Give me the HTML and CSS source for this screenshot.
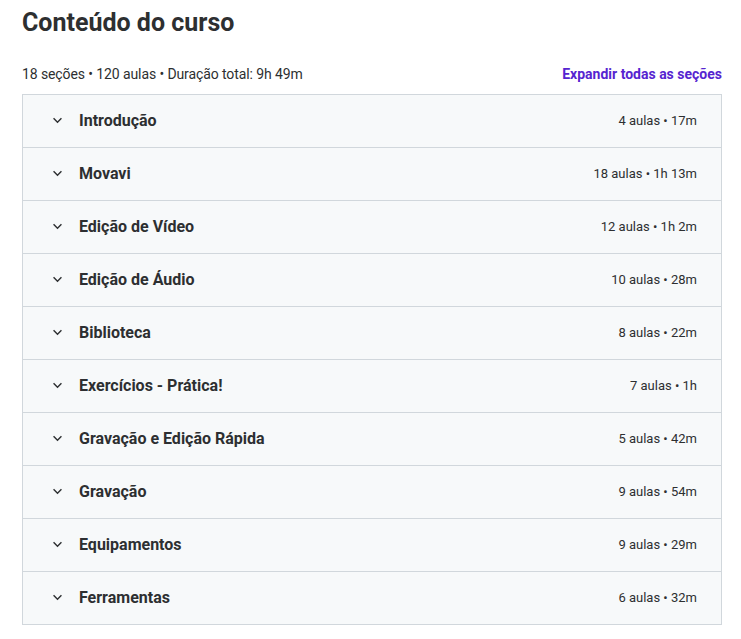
FILE: index.html
```html
<!DOCTYPE html>
<html lang="pt-BR">
<head>
    <meta charset="UTF-8"/>
    <meta name="viewport" content="width=device-width, initial-scale=1"/>
    <title>Conteúdo do curso</title>
    <link rel="stylesheet" href="styles.css">
</head>
<body>

<div class="curso">
    <h2 class="curso-titulo">Conteúdo do curso</h2>

    <div class="curso-resumo">
        <span>18 seções • 120 aulas • Duração total: 9h 49m</span>
        <button class="expandir">Expandir todas as seções</button>
    </div>

    <div class="secoes">
        <div class="secao">
            <svg class="seta" viewBox="0 0 12 8"><path d="M1.5 1.5 6 6l4.5-4.5"/></svg>
            <span class="secao-nome">Introdução</span>
            <span class="secao-info">4 aulas • 17m</span>
        </div>
        <div class="secao">
            <svg class="seta" viewBox="0 0 12 8"><path d="M1.5 1.5 6 6l4.5-4.5"/></svg>
            <span class="secao-nome">Movavi</span>
            <span class="secao-info">18 aulas • 1h 13m</span>
        </div>
        <div class="secao">
            <svg class="seta" viewBox="0 0 12 8"><path d="M1.5 1.5 6 6l4.5-4.5"/></svg>
            <span class="secao-nome">Edição de Vídeo</span>
            <span class="secao-info">12 aulas • 1h 2m</span>
        </div>
        <div class="secao">
            <svg class="seta" viewBox="0 0 12 8"><path d="M1.5 1.5 6 6l4.5-4.5"/></svg>
            <span class="secao-nome">Edição de Áudio</span>
            <span class="secao-info">10 aulas • 28m</span>
        </div>
        <div class="secao">
            <svg class="seta" viewBox="0 0 12 8"><path d="M1.5 1.5 6 6l4.5-4.5"/></svg>
            <span class="secao-nome">Biblioteca</span>
            <span class="secao-info">8 aulas • 22m</span>
        </div>
        <div class="secao">
            <svg class="seta" viewBox="0 0 12 8"><path d="M1.5 1.5 6 6l4.5-4.5"/></svg>
            <span class="secao-nome">Exercícios - Prática!</span>
            <span class="secao-info">7 aulas • 1h</span>
        </div>
        <div class="secao">
            <svg class="seta" viewBox="0 0 12 8"><path d="M1.5 1.5 6 6l4.5-4.5"/></svg>
            <span class="secao-nome">Gravação e Edição Rápida</span>
            <span class="secao-info">5 aulas • 42m</span>
        </div>
        <div class="secao">
            <svg class="seta" viewBox="0 0 12 8"><path d="M1.5 1.5 6 6l4.5-4.5"/></svg>
            <span class="secao-nome">Gravação</span>
            <span class="secao-info">9 aulas • 54m</span>
        </div>
        <div class="secao">
            <svg class="seta" viewBox="0 0 12 8"><path d="M1.5 1.5 6 6l4.5-4.5"/></svg>
            <span class="secao-nome">Equipamentos</span>
            <span class="secao-info">9 aulas • 29m</span>
        </div>
        <div class="secao">
            <svg class="seta" viewBox="0 0 12 8"><path d="M1.5 1.5 6 6l4.5-4.5"/></svg>
            <span class="secao-nome">Ferramentas</span>
            <span class="secao-info">6 aulas • 32m</span>
        </div>
    </div>
</div>

</body>
</html>
```

FILE: styles.css
```css
/* RESET BASICO */
* {
    margin: 0;
    padding: 0;
    box-sizing: border-box;
}

body {
    font-family: 'Roboto', 'Liberation Sans', sans-serif;
    background: #fff;
    color: #2d2f31;
}

.curso {
    width: 741px;
    padding: 8px 19px 0 22px;
}

.curso-titulo {
    font-size: 25px;
    font-weight: 700;
    line-height: 30px;
    color: #2d2f31;
}

.curso-resumo {
    display: flex;
    justify-content: space-between;
    align-items: center;
    margin-top: 26px;
    height: 20px;
    font-size: 14px;
    letter-spacing: -0.1px;
    color: #2d2f31;
}

.expandir {
    background: none;
    border: none;
    font-family: inherit;
    font-size: 14px;
    font-weight: 700;
    color: #5624d0;
    cursor: pointer;
}

.secoes {
    margin-top: 10px;
    border: 1px solid #d1d7dc;
}

.secao {
    display: flex;
    align-items: center;
    height: 53px;
    padding: 0 24px 1px 29px;
    background: #f7f9fa;
    border-bottom: 1px solid #d1d7dc;
}

.secao:last-child {
    height: 52px;
    border-bottom: none;
}

.seta {
    width: 11px;
    height: 7px;
    fill: none;
    stroke: #2d2f31;
    stroke-width: 1.6;
    margin-right: 16px;
    flex-shrink: 0;
}

.secao-nome {
    flex: 1;
    font-size: 16px;
    font-weight: 700;
    color: #2d2f31;
}

.secao-info {
    font-size: 13px;
    color: #2d2f31;
}
```
